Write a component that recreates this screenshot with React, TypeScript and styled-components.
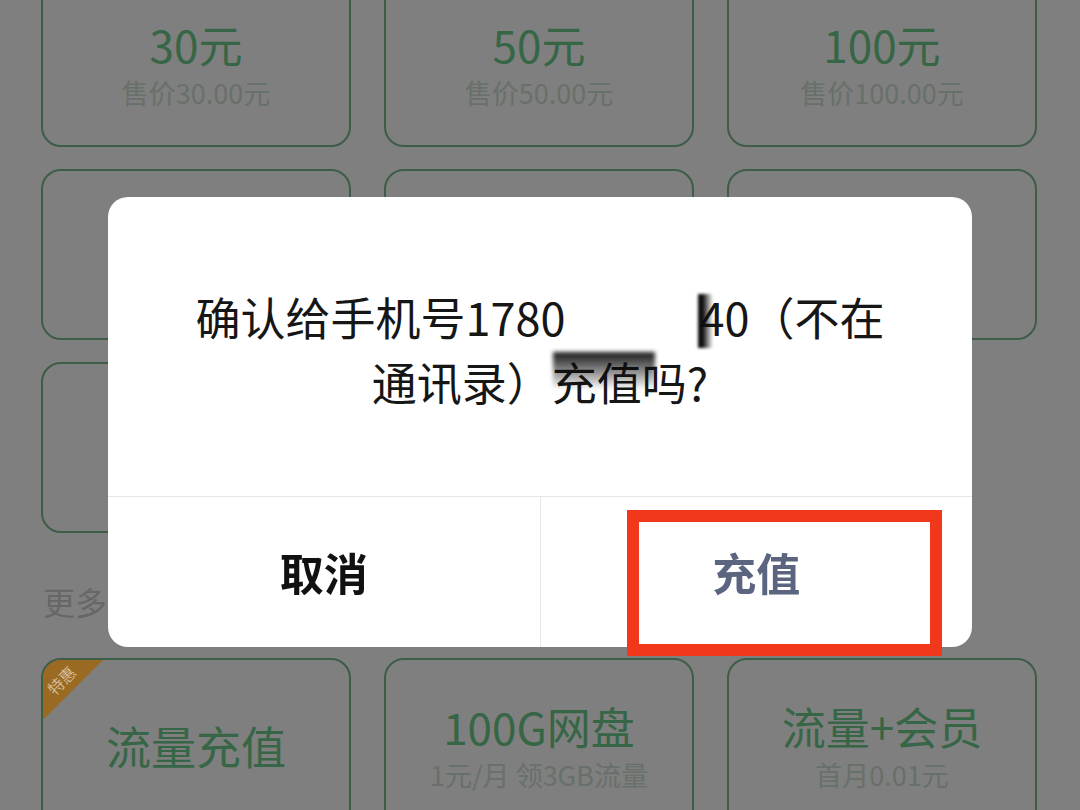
import React from "react";
import styled, { createGlobalStyle } from "styled-components";

const GlobalStyle = createGlobalStyle`
  html, body {
    margin: 0;
    padding: 0;
    overflow: hidden;
    background: #7f7f7f;
  }
  body {
    font-family: "Noto Sans CJK SC", "Noto Sans", sans-serif;
  }
`;

const Page = styled.div`
  width: 1080px;
  height: 810px;
  overflow: hidden;
  padding: 0 41px;
  box-sizing: border-box;
  background: #7f7f7f;
`;

const Grid = styled.div<{ $top?: number }>`
  display: grid;
  grid-template-columns: repeat(3, 310px);
  grid-auto-rows: 171px;
  column-gap: 33px;
  row-gap: 22px;
  margin-top: ${(p) => p.$top ?? 0}px;
`;

const Card = styled.div`
  position: relative;
  overflow: hidden;
  border: 2px solid #3d5d47;
  border-radius: 20px;
  box-sizing: border-box;
  display: flex;
  flex-direction: column;
  align-items: center;
  justify-content: center;
  padding-top: 4px;
  gap: 6px;
`;

const Title = styled.div<{ $size?: number }>`
  font-size: ${(p) => p.$size ?? 44}px;
  line-height: 1.2;
  color: #366645;
  white-space: nowrap;
`;

const Sub = styled.div`
  font-size: 27px;
  line-height: 1.2;
  color: #677069;
  white-space: nowrap;
`;

const Ribbon = styled.div`
  position: absolute;
  top: 0;
  left: 0;
  width: 60px;
  height: 60px;
  background: #9a6a22;
  clip-path: polygon(0 0, 100% 0, 0 100%);
`;

const RibbonText = styled.span`
  position: absolute;
  top: 12px;
  left: 2px;
  font-size: 16px;
  line-height: 1;
  color: #d2bb95;
  transform: rotate(-45deg);
  white-space: nowrap;
`;

const SectionLabel = styled.div`
  margin: 47px 0 36px 2px;
  font-size: 32px;
  line-height: 42px;
  color: #676767;
`;

const Overlay = styled.div`
  position: fixed;
  inset: 0;
  display: flex;
  justify-content: center;
  align-items: flex-start;
  padding-top: 197px;
  box-sizing: border-box;
`;

const Dialog = styled.div`
  width: 864px;
  background: #ffffff;
  border-radius: 20px;
  display: flex;
  flex-direction: column;
`;

const Message = styled.div`
  height: 300px;
  display: flex;
  align-items: center;
  justify-content: center;
  text-align: center;
  font-size: 45px;
  line-height: 65px;
  color: #161616;
  border-bottom: 1px solid #e6e6e6;
  padding-top: 4px;
  box-sizing: border-box;
`;

const Redacted = styled.span`
  position: relative;
  display: inline-block;
  width: 134px;
  height: 50px;
  vertical-align: -12px;
  background: #ffffff;

  &::before {
    content: "";
    position: absolute;
    right: -14px;
    top: -4px;
    width: 15px;
    height: 54px;
    background: linear-gradient(to right, #0d0d0d 30%, rgba(0, 0, 0, 0));
    filter: blur(1.5px);
  }

  &::after {
    content: "";
    position: absolute;
    left: -12px;
    top: 54px;
    width: 102px;
    height: 38px;
    background: linear-gradient(
      to bottom,
      rgba(10, 10, 10, 0.95),
      rgba(10, 10, 10, 0) 100%
    );
    filter: blur(2px);
  }
`;

const Actions = styled.div`
  height: 150px;
  display: flex;
`;

const Action = styled.div<{ $primary?: boolean }>`
  position: relative;
  flex: 1;
  display: flex;
  align-items: center;
  justify-content: center;
  font-size: 44px;
  font-weight: 700;
  color: ${(p) => (p.$primary ? "#5b6580" : "#111111")};
  & + & {
    border-left: 1px solid #e8e8e8;
  }
`;

const Highlight = styled.div`
  position: absolute;
  left: 86px;
  top: 13px;
  width: 315px;
  height: 146px;
  border: 12px solid #f1381a;
  box-sizing: border-box;
  pointer-events: none;
`;

const amounts = [
  { title: "30元", sub: "售价30.00元" },
  { title: "50元", sub: "售价50.00元" },
  { title: "100元", sub: "售价100.00元" },
  { title: "200元", sub: "售价200.00元" },
  { title: "300元", sub: "售价300.00元" },
  { title: "500元", sub: "售价500.00元" },
  { title: "其他", sub: "" },
];

function App() {
  return (
    <>
      <GlobalStyle />
      <Page>
        <Grid $top={-24}>
          {amounts.map((item, index) => (
            <Card key={index}>
              <Title>{item.title}</Title>
              {item.sub ? <Sub>{item.sub}</Sub> : null}
            </Card>
          ))}
        </Grid>
        <SectionLabel>更多服务</SectionLabel>
        <Grid>
          <Card>
            <Ribbon>
              <RibbonText>特惠</RibbonText>
            </Ribbon>
            <Title $size={45}>流量充值</Title>
          </Card>
          <Card>
            <Title>100G网盘</Title>
            <Sub>1元/月 领3GB流量</Sub>
          </Card>
          <Card>
            <Title>流量+会员</Title>
            <Sub>首月0.01元</Sub>
          </Card>
        </Grid>
      </Page>
      <Overlay>
        <Dialog>
          <Message>
            <div>
              确认给手机号1780
              <Redacted />
              40（不在
              <br />
              通讯录）充值吗?
            </div>
          </Message>
          <Actions>
            <Action>取消</Action>
            <Action $primary>
              充值
              <Highlight />
            </Action>
          </Actions>
        </Dialog>
      </Overlay>
    </>
  );
}

export default App;
